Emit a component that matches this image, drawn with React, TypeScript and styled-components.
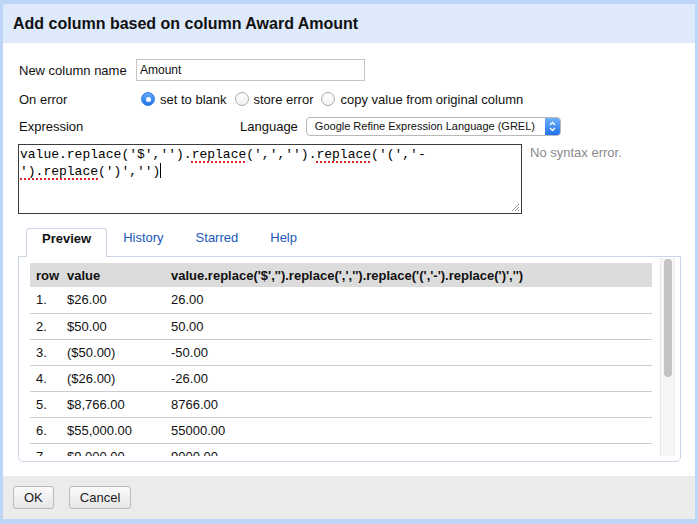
import React from "react";
import styled, { createGlobalStyle } from "styled-components";

const Global = createGlobalStyle`
  html, body { margin: 0; padding: 0; background: #bdd6f7; }
  body { font-family: "Liberation Sans", Arial, sans-serif; font-size: 13px; color: #111; }
`;

const Frame = styled.div`
  width: 698px;
  height: 524px;
  box-sizing: border-box;
  padding: 4px 3px 5px 3px;
  background: #bdd6f7;
  display: flex;
`;

const Dialog = styled.div`
  flex: 1;
  display: flex;
  flex-direction: column;
  background: #fff;
`;

const Header = styled.div`
  height: 39px;
  background: #dee9fb;
  display: flex;
  align-items: center;
  padding-left: 10px;
  font-size: 16px;
  font-weight: bold;
  color: #111;
`;

const Body = styled.div`
  flex: 1;
  padding: 12px 14px 14px 15px;
  display: flex;
  flex-direction: column;
`;

const FormRow = styled.div<{ $h: number }>`
  height: ${(p) => p.$h}px;
  display: flex;
  align-items: center;
`;

const Label = styled.div`
  width: 117px;
  padding-left: 1px;
  flex: none;
`;

const TextInput = styled.input`
  width: 229px;
  height: 22px;
  box-sizing: border-box;
  border: 1px solid #c4c4c4;
  padding: 0 3px;
  font-family: "Liberation Sans", Arial, sans-serif;
  font-size: 12px;
  color: #111;
  outline: none;
`;

const RadioGroup = styled.div`
  display: flex;
  align-items: center;
  margin-left: 5px;
`;

const RadioLabel = styled.label`
  display: flex;
  align-items: center;
  margin-right: 8px;
`;

const Radio = styled.input`
  appearance: none;
  margin: 0 5px 0 0;
  width: 14px;
  height: 14px;
  border-radius: 50%;
  border: 1px solid #a9a9a9;
  background: linear-gradient(#fff, #f1f1f1);
  box-sizing: border-box;
  position: relative;
  &:checked {
    border-color: #2f7ee6;
    background: linear-gradient(#63a8f8, #2276ea);
  }
  &:checked::after {
    content: "";
    position: absolute;
    left: 3.5px;
    top: 3.5px;
    width: 5px;
    height: 5px;
    border-radius: 50%;
    background: #fff;
  }
`;

const LangGroup = styled.div`
  display: flex;
  align-items: center;
  margin-left: 104px;
`;

const LangLabel = styled.span`
  margin-right: 8px;
`;

const SelectBox = styled.div`
  width: 255px;
  height: 19px;
  box-sizing: border-box;
  border: 1px solid #b9b9b9;
  border-radius: 4px;
  display: flex;
  align-items: stretch;
  font-size: 11px;
  background: #fff;
  overflow: hidden;
`;

const SelectText = styled.span`
  flex: 1;
  padding-left: 8px;
  display: flex;
  align-items: center;
  white-space: nowrap;
`;

const SelectArrow = styled.span`
  width: 15px;
  background: linear-gradient(#6eb0fa, #1f72ea);
  display: flex;
  align-items: center;
  justify-content: center;
`;

const ExprRow = styled.div`
  margin-top: 5px;
  display: flex;
  align-items: flex-start;
`;

const Editor = styled.div`
  position: relative;
  width: 504px;
  height: 70px;
  box-sizing: border-box;
  border: 1px solid #3c3c3c;
  padding: 2px 1px;
  font-family: "Liberation Mono", "Courier New", monospace;
  font-size: 13px;
  line-height: 16px;
  white-space: pre;
  color: #000;
`;

const Spell = styled.span`
  text-decoration: underline dotted #e0262b;
  text-decoration-thickness: 2px;
  text-underline-offset: 3px;
`;

const Caret = styled.span`
  display: inline-block;
  width: 1px;
  height: 15px;
  background: #000;
  vertical-align: -3px;
`;

const Grip = styled.svg`
  position: absolute;
  right: 1px;
  bottom: 1px;
`;

const Status = styled.div`
  margin-left: 8px;
  margin-top: 1px;
  color: #8a8a8a;
  font-size: 13px;
`;

const Tabs = styled.div`
  margin-top: 14px;
  display: flex;
  padding-left: 8px;
  height: 28px;
  position: relative;
  z-index: 1;
`;

const Tab = styled.div<{ $active?: boolean }>`
  padding: 0 15px 10px 15px;
  box-sizing: border-box;
  height: ${(p) => (p.$active ? 29 : 28)}px;
  font-weight: ${(p) => (p.$active ? "bold" : "normal")};
  color: ${(p) => (p.$active ? "#111" : "#2058b8")};
  background: ${(p) => (p.$active ? "#fff" : "transparent")};
  border: 1px solid ${(p) => (p.$active ? "#c9d5e4" : "transparent")};
  border-bottom: none;
  border-radius: 3px 3px 0 0;
  display: flex;
  align-items: center;
`;

const Panel = styled.div`
  width: 663px;
  height: 206px;
  box-sizing: border-box;
  border: 1px solid #c9d5e4;
  border-radius: 0 0 5px 5px;
  padding: 1px 5px 5px 5px;
`;

const ScrollArea = styled.div`
  height: 198px;
  display: flex;
`;

const Viewport = styled.div`
  flex: 1;
  overflow: hidden;
  padding: 5px 7px 0 6px;
`;

const Track = styled.div`
  width: 15px;
  box-sizing: border-box;
  background: #f6f6f6;
  border-left: 1px solid #e8e8e8;
  border-right: 1px solid #efefef;
  padding: 1px 2px 0 3px;
`;

const Thumb = styled.div<{ $h: number }>`
  height: ${(p) => p.$h}px;
  border-radius: 5px;
  background: #c3c3c3;
`;

const Table = styled.table`
  width: 622px;
  border-collapse: collapse;
  table-layout: fixed;
`;

const Th = styled.th<{ $w?: number }>`
  ${(p) => (p.$w ? `width: ${p.$w}px;` : "")}
  background: #dcdcdc;
  height: 24px;
  padding: 0 0 0 6px;
  text-align: left;
  font-weight: bold;
  white-space: nowrap;
  box-sizing: border-box;
`;

const Td = styled.td`
  height: 26px;
  padding: 0 0 0 6px;
  border-bottom: 1px solid #cccccc;
  white-space: nowrap;
  box-sizing: border-box;
`;

const Footer = styled.div`
  height: 43px;
  background: #ebebeb;
  display: flex;
  align-items: flex-start;
  padding: 10px 0 0 10px;
  box-sizing: border-box;
  gap: 15px;
`;

const Button = styled.button`
  height: 23px;
  padding: 0 10px;
  border: 1px solid #b9b9b9;
  border-radius: 3px;
  background: linear-gradient(#fafafa, #e6e6e6);
  font-family: "Liberation Sans", Arial, sans-serif;
  font-size: 13px;
  color: #222;
`;

const rows: [string, string][] = [
  ["$26.00", "26.00"],
  ["$50.00", "50.00"],
  ["($50.00)", "-50.00"],
  ["($26.00)", "-26.00"],
  ["$8,766.00", "8766.00"],
  ["$55,000.00", "55000.00"],
  ["$9,000.00", "9000.00"],
  ["$12,500.00", "12500.00"],
  ["$4,200.00", "4200.00"],
  ["$750.00", "750.00"],
];

export default function App() {
  return (
    <>
      <Global />
      <Frame>
        <Dialog>
          <Header>Add column based on column Award Amount</Header>
          <Body>
            <FormRow $h={30}>
              <Label>New column name</Label>
              <TextInput defaultValue="Amount" />
            </FormRow>
            <FormRow $h={28}>
              <Label>On error</Label>
              <RadioGroup>
                <RadioLabel>
                  <Radio type="radio" name="onerror" defaultChecked />
                  set to blank
                </RadioLabel>
                <RadioLabel>
                  <Radio type="radio" name="onerror" />
                  store error
                </RadioLabel>
                <RadioLabel>
                  <Radio type="radio" name="onerror" />
                  copy value from original column
                </RadioLabel>
              </RadioGroup>
            </FormRow>
            <FormRow $h={26}>
              <Label>Expression</Label>
              <LangGroup>
                <LangLabel>Language</LangLabel>
                <SelectBox>
                  <SelectText>Google Refine Expression Language (GREL)</SelectText>
                  <SelectArrow>
                    <svg width="7" height="11" viewBox="0 0 7 11">
                      <path d="M1 4 L3.5 1.5 L6 4 M1 7 L3.5 9.5 L6 7" fill="none" stroke="#fff" strokeWidth="1.3" />
                    </svg>
                  </SelectArrow>
                </SelectBox>
              </LangGroup>
            </FormRow>
            <ExprRow>
              <Editor role="textbox">
                {"value.replace('$','')."}
                <Spell>replace</Spell>
                {"(',','')."}
                <Spell>replace</Spell>
                {"('(','-\n"}
                <Spell>{"').replace"}</Spell>
                {"(')','')"}
                <Caret />
                <Grip width="10" height="10" viewBox="0 0 10 10">
                  <path d="M9 2 L2 9 M9 5 L5 9 M9 8 L8 9" stroke="#9a9a9a" strokeWidth="1" />
                </Grip>
              </Editor>
              <Status>No syntax error.</Status>
            </ExprRow>
            <Tabs>
              <Tab $active>Preview</Tab>
              <Tab>History</Tab>
              <Tab>Starred</Tab>
              <Tab>Help</Tab>
            </Tabs>
            <Panel>
              <ScrollArea>
                <Viewport>
                  <Table>
                    <thead>
                      <tr>
                        <Th $w={31}>row</Th>
                        <Th $w={104}>value</Th>
                        <Th>{"value.replace('$','').replace(',','').replace('(','-').replace(')','')"}</Th>
                      </tr>
                    </thead>
                    <tbody>
                      {rows.map(([v, r], i) => (
                        <tr key={i}>
                          <Td>{i + 1}.</Td>
                          <Td>{v}</Td>
                          <Td>{r}</Td>
                        </tr>
                      ))}
                    </tbody>
                  </Table>
                </Viewport>
                <Track>
                  <Thumb $h={118} />
                </Track>
              </ScrollArea>
            </Panel>
          </Body>
          <Footer>
            <Button>OK</Button>
            <Button>Cancel</Button>
          </Footer>
        </Dialog>
      </Frame>
    </>
  );
}
